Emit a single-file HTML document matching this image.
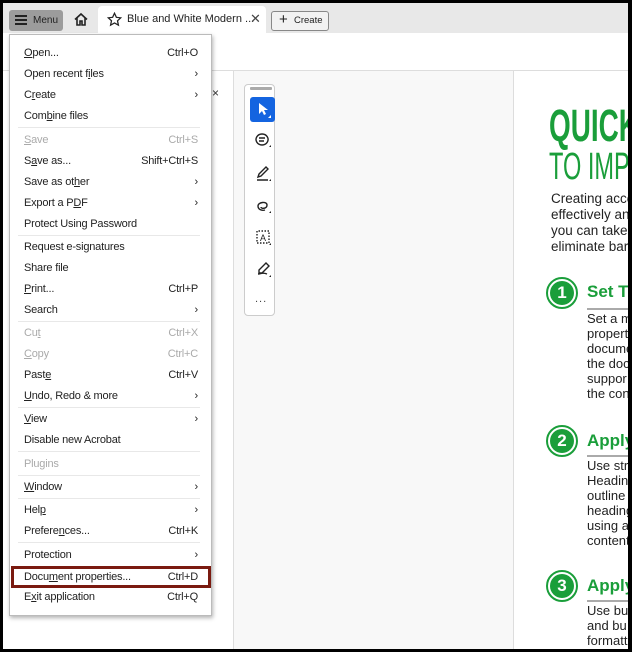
<!DOCTYPE html>
<html><head><meta charset="utf-8"><style>
*{margin:0;padding:0;box-sizing:border-box}
body{width:632px;height:652px;overflow:hidden;background:#000;position:relative;font-family:"Liberation Sans",sans-serif}
#f{position:absolute;left:3px;top:3px;width:625px;height:646px;background:#fff;overflow:hidden}
.a{position:absolute;white-space:nowrap}
.mi{position:absolute;left:14px;width:174px;font-size:11px;color:#222;height:14px;line-height:14px;white-space:nowrap;letter-spacing:-0.2px}
.mi .k{position:absolute;right:0;top:0}
.dis{color:#aaa}
.sep{position:absolute;left:8px;width:182px;height:1px;background:#e8e8e8}
.pt{position:absolute;left:548px;font-size:13.5px;color:#222;line-height:16px;white-space:nowrap}
.circ{position:absolute;width:32px;height:32px;border-radius:50%;border:2px solid #1a9e3a;background:#fff}
.circ div{position:absolute;left:2px;top:2px;width:24px;height:24px;border-radius:50%;background:#1a9e3a;color:#fff;font-weight:bold;font-size:17px;text-align:center;line-height:24px}
.h{position:absolute;left:584px;font-weight:bold;color:#1a9e3a;font-size:17px;white-space:nowrap}
.ul{position:absolute;left:584px;width:50px;height:2px;background:#aaa}
</style></head><body><div id="f">
<div class="a" style="left:0;top:0;width:625px;height:30px;background:#e8e8e8"></div>
<div class="a" style="left:6px;top:7px;width:54px;height:21px;background:#9c9c9c;border-radius:3px"></div>
<div class="a" style="left:12px;top:12px;width:12px;height:2px;background:#222;box-shadow:0 4px 0 #222,0 8px 0 #222"></div>
<div class="a" style="left:30px;top:12px;font-size:10px;color:#222;line-height:12px">Menu</div>
<svg class="a" style="left:70px;top:9px" width="16" height="15" viewBox="0 0 16 15"><path d="M2 7.5L8 2l6 5.5M4 6v7h3v-4h2v4h3V6" fill="none" stroke="#222" stroke-width="1.6"/></svg>
<div class="a" style="left:95px;top:3px;width:168px;height:28px;background:#fff;border-radius:4px 4px 0 0"></div>
<svg class="a" style="left:104px;top:9px" width="15" height="15" viewBox="0 0 24 24"><path d="M12 2l3 6.5 7 .8-5.2 4.8 1.5 7L12 17.5 5.7 21l1.5-7L2 9.3l7-.8z" fill="none" stroke="#222" stroke-width="2"/></svg>
<div class="a" style="left:124px;top:10px;font-size:11px;color:#222">Blue and White Modern ...</div>
<div class="a" style="left:247px;top:8px;font-size:13px;color:#444">✕</div>
<div class="a" style="left:268px;top:8px;width:58px;height:20px;border:1px solid #888;border-radius:3px;background:#f2f2f2"></div>
<div class="a" style="left:276px;top:8px;font-size:15px;color:#222">+</div>
<div class="a" style="left:291px;top:12px;font-size:9.5px;color:#222">Create</div>
<div class="a" style="left:0;top:67px;width:625px;height:1px;background:#ddd"></div>
<div class="a" style="left:230px;top:68px;width:281px;height:580px;background:#f8f8f8;border-left:1px solid #ddd;border-right:1px solid #ddd"></div>
<div class="a" style="left:209px;top:83px;font-size:12px;color:#333">×</div>
<div class="a" style="left:241px;top:81px;width:31px;height:232px;background:#fff;border:1px solid #ccc;border-radius:4px"></div>
<div class="a" style="left:247px;top:84px;width:22px;height:3px;background:#aaa;border-radius:1px"></div>
<div class="a" style="left:247px;top:94px;width:25px;height:25px;background:#1464e0;border-radius:3px"></div>
<svg class="a" style="left:253px;top:98px" width="16" height="18" viewBox="0 0 16 18"><path d="M3 2v11l3-3 2 4 2-1-2-4h4z" fill="#fff"/><path d="M15 14v3h-3z" fill="#fff"/></svg>
<svg class="a" style="left:251px;top:128px" width="20" height="160" viewBox="0 0 20 160" fill="none" stroke="#222" stroke-width="1.4">
<path d="M8 3a6 5.5 0 1 0 0.1 0zM5 7h6M5 10h5"/><path d="M15 16l2-2v2z" fill="#222" stroke="none"/>
<path d="M12 36l-7 7-1 3 3-1 7-7zM3 49h11"/><path d="M15 50l2-2v2z" fill="#222" stroke="none"/>
<path d="M4 75c0-4 9-5 9-1s-6 4-6 2M4 75c0 3 3 5 7 4"/><path d="M15 82l2-2v2z" fill="#222" stroke="none"/>
<path d="M3 100v12h12V100z" stroke-dasharray="1.5 1.5"/><text x="6" y="110" font-size="9" fill="#222" stroke="none" font-family="Liberation Sans">A</text><path d="M15 114l2-2v2z" fill="#222" stroke="none"/>
<path d="M12 132l-7 7v3h3l7-7zM4 143c3 0 4-2 9 0"/><path d="M15 146l2-2v2z" fill="#222" stroke="none"/>
</svg>
<div class="a" style="left:252px;top:290px;font-size:11px;color:#444;letter-spacing:1px">...</div>
<div class="a" style="left:546px;top:98px;font-weight:bold;font-size:45px;line-height:50px;color:#1a9e3a;transform:scaleX(0.62);transform-origin:left">QUICK</div>
<div class="a" style="left:546px;top:143px;font-size:38px;line-height:42px;color:#1a9e3a;transform:scaleX(0.62);transform-origin:left">TO IMPROVE</div>
<div class="pt" style="top:188px">Creating accessible<br>effectively and<br>you can take<br>eliminate barriers</div>
<div class="circ" style="left:543px;top:274px"><div>1</div></div>
<div class="h" style="top:279px">Set The</div><div class="ul" style="top:305px"></div>
<div class="pt" style="top:308px;left:584px;font-size:13px;line-height:15px">Set a m<br>propert<br>docume<br>the doc<br>suppor<br>the con</div>
<div class="circ" style="left:543px;top:422px"><div>2</div></div>
<div class="h" style="top:428px">Apply</div><div class="ul" style="top:452px"></div>
<div class="pt" style="top:455px;left:584px;font-size:13px;line-height:15px">Use str<br>Headin<br>outline<br>heading<br>using a<br>content</div>
<div class="circ" style="left:543px;top:567px"><div>3</div></div>
<div class="h" style="top:573px">Apply</div><div class="ul" style="top:597px"></div>
<div class="pt" style="top:600px;left:584px;font-size:13px;line-height:15px">Use bu<br>and bu<br>formatt</div>
<div class="a" style="left:6px;top:31px;width:203px;height:582px;background:#fff;border:1px solid #bbb;box-shadow:1px 2px 4px rgba(0,0,0,.3)">
<div class="mi" style="top:11px"><u>O</u>pen...<span class="k">Ctrl+O</span></div>
<div class="mi" style="top:32px">Open recent f<u>i</u>les<span class="k">›</span></div>
<div class="mi" style="top:53px">C<u>r</u>eate<span class="k">›</span></div>
<div class="mi" style="top:74px">Com<u>b</u>ine files</div>
<div class="sep" style="top:92px"></div>
<div class="mi dis" style="top:98px"><u>S</u>ave<span class="k">Ctrl+S</span></div>
<div class="mi" style="top:119px">S<u>a</u>ve as...<span class="k">Shift+Ctrl+S</span></div>
<div class="mi" style="top:140px">Save as ot<u>h</u>er<span class="k">›</span></div>
<div class="mi" style="top:161px">Export a P<u>D</u>F<span class="k">›</span></div>
<div class="mi" style="top:182px">Protect Using Password</div>
<div class="sep" style="top:200px"></div>
<div class="mi" style="top:205px">Request e-signatures</div>
<div class="mi" style="top:226px">Share file</div>
<div class="mi" style="top:247px"><u>P</u>rint...<span class="k">Ctrl+P</span></div>
<div class="mi" style="top:268px">Search<span class="k">›</span></div>
<div class="sep" style="top:286px"></div>
<div class="mi dis" style="top:291px">Cu<u>t</u><span class="k">Ctrl+X</span></div>
<div class="mi dis" style="top:312px"><u>C</u>opy<span class="k">Ctrl+C</span></div>
<div class="mi" style="top:333px">Past<u>e</u><span class="k">Ctrl+V</span></div>
<div class="mi" style="top:354px"><u>U</u>ndo, Redo &amp; more<span class="k">›</span></div>
<div class="sep" style="top:372px"></div>
<div class="mi" style="top:377px"><u>V</u>iew<span class="k">›</span></div>
<div class="mi" style="top:398px">Disable new Acrobat</div>
<div class="sep" style="top:416px"></div>
<div class="mi dis" style="top:422px">Plugins</div>
<div class="sep" style="top:440px"></div>
<div class="mi" style="top:445px"><u>W</u>indow<span class="k">›</span></div>
<div class="sep" style="top:463px"></div>
<div class="mi" style="top:468px">Hel<u>p</u><span class="k">›</span></div>
<div class="mi" style="top:489px">Prefere<u>n</u>ces...<span class="k">Ctrl+K</span></div>
<div class="sep" style="top:507px"></div>
<div class="mi" style="top:513px">Protection<span class="k">›</span></div>
<div class="mi" style="top:535px">Docu<u>m</u>ent properties...<span class="k">Ctrl+D</span></div>
<div class="mi" style="top:555px">E<u>x</u>it application<span class="k">Ctrl+Q</span></div>
</div>
<div class="a" style="left:8px;top:563px;width:200px;height:22px;border:3px solid #7a1a10"></div>
</div></body></html>
